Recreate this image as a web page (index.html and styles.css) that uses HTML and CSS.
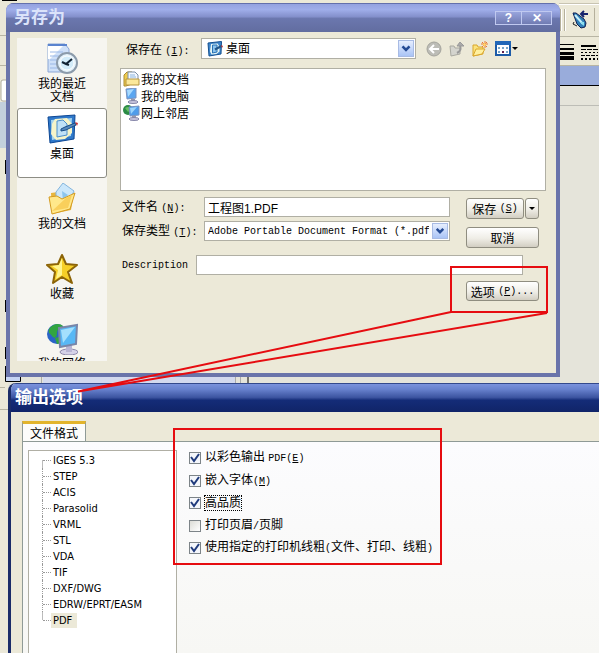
FILE: index.html
```html
<!DOCTYPE html>
<html lang="zh-CN">
<head>
    <meta charset="UTF-8">
    <meta name="viewport" content="width=device-width, initial-scale=1.0">
    <title>另存为</title>
    <link rel="stylesheet" href="styles.css">
</head>
<body>
    <div class="desktop">

        <!-- application window behind the dialogs -->
        <div class="app">
            <div class="app-bar">
                <svg width="40" height="36" viewBox="0 0 40 36">
                    <path d="M0 3.500h40" stroke="#c8c4b2"/><path d="M0 4.500h40" stroke="#fff"/>
                    <path d="M1.500 9v22M5.500 9v22" stroke="#b5b09c"/><path d="M2.500 9v22M6.500 9v22" stroke="#fff"/>
                    <path d="M14 13l3 0 8 6 2 4-1 4-4 1-4-4z" fill="#2f7fb8" stroke="#101f52"/>
                    <path d="M16 15l8 9" stroke="#c8f0fa" stroke-width="2"/>
                    <path d="M21 22l4 0 0 4z" fill="#8be0f0"/>
                    <path d="M15 22l-1 2 4 2" fill="none" stroke="#222"/>
                    <path d="M29 14h-6M25 11l-3 3 3 3" fill="none" stroke="#16246e" stroke-width="2"/>
                    <path d="M35.500 8v23" stroke="#b5b09c"/>
                </svg>
            </div>
            <div class="app-bar">
                <svg width="40" height="28" viewBox="0 0 40 28">
                    <path d="M0 7.500h15" stroke="#000"/><path d="M0 12h15" stroke="#000" stroke-width="2"/>
                    <path d="M0 16.500h15" stroke="#000" stroke-width="3"/><path d="M0 21h15" stroke="#000" stroke-width="4"/>
                    <path d="M22 9h15" stroke="#000" stroke-width="2"/>
                    <path d="M22 12.500h17" stroke="#000" stroke-dasharray="5 1"/>
                    <path d="M22 15.500h17" stroke="#000" stroke-dasharray="2 2"/>
                    <path d="M22 18.500h17" stroke="#000" stroke-dasharray="4 1"/>
                    <path d="M22 22h17" stroke="#000" stroke-dasharray="2 2" stroke-width="2"/>
                </svg>
            </div>
            <div class="app-title"></div>
            <div class="app-line"></div>
        </div>
        <svg class="backdrop" width="600" height="653" viewBox="0 0 600 653">
            <path d="M2 0h15v1H2z"/>
            <path d="M0 35.500h6M0 65.500h6M0 387.500h5M0 409.500h8" stroke="#b8b5a4"/>
            <path d="M6 80H3q-2 0-2 2v17q0 2 2 2h3" fill="#fff" stroke="#b0ad9e"/>
            <path d="M0 102h6v46H0z" fill="#c3d0dc"/>
            <path d="M5 160h1v14H5zM5 300h1v12H5zM5 347h1v12H5z"/>
            <path d="M43 377h192v6H43z" fill="#d3d9ee"/>
            <path d="M5.500 366v15.500h15V377" fill="#c6d4f4" stroke="#000"/>
            <path d="M41.500 377v6M235.500 377v6M240.500 377v6" stroke="#aaa"/>
            <path d="M248 377v6" stroke="#000"/>
        </svg>

        <!-- save as -->
        <div class="window save">
            <div class="titlebar">
                <h1>另存为</h1>
                <div class="caption-buttons">
                    <button type="button">?</button>
                    <button type="button">✕</button>
                </div>
            </div>
            <div class="save-body">
                <div class="places">
                    <button type="button" class="place">
                        <svg width="32" height="32" viewBox="0 0 32 32">
                            <path d="M2 1h17l4 5v23H2z" fill="#cfe0f8" stroke="#8ba6d4"/>
                            <path d="M2 1h17l-15 15H2z" fill="#fff"/>
                            <path d="M2 1h19v2H2z" fill="#5b84cf"/>
                            <path d="M4 9h13M4 13h9M4 17h7M4 21h7M4 25h9" stroke="#9bb8e6"/>
                            <circle cx="21" cy="20" r="10" fill="#e4f2fb" stroke="#8c9bab" stroke-width="2"/>
                            <circle cx="21" cy="20" r="7" fill="#d3ecfa" stroke="#fff"/>
                            <path d="M26 16l-6 5-4-2M20 21l3 1" fill="none" stroke="#123" stroke-width="2"/>
                        </svg>
                        <span>我的最近<br>文档</span>
                    </button>
                    <button type="button" class="place selected">
                        <svg width="32" height="32" viewBox="0 0 32 32">
                            <path d="M2 4l27-2-1 24-24 4z" fill="#2f78c9" stroke="#0d4794"/>
                            <path d="M5 7l21-2-1 18-19 4z" fill="#a5d4ef"/>
                            <path d="M9 6l12-1 5 6v9l-7 6-9 1-5-6 1-10z" fill="#f6f4c9"/>
                            <path d="M11 8l6-1 4 4v11l-10 2z" fill="#bfe1f7" stroke="#4b8fcc"/>
                            <path d="M15 16l4-2 10-4 1 2-10 5-5 1z" fill="#5689be" stroke="#174d88"/>
                            <path d="M29 9l3 1-1 3z" fill="#c33"/>
                        </svg>
                        <span>桌面</span>
                    </button>
                    <button type="button" class="place">
                        <svg width="32" height="32" viewBox="0 0 32 32">
                            <path d="M5 10l7-1 3 4 13-3-3 17-19 4z" fill="#e8b63e"/>
                            <path d="M10 9l7-9 11 8-7 15-11-2z" fill="#cbe7fb" stroke="#83b4dc"/>
                            <path d="M16 8l6 4-5 6z" fill="#8cc5ee"/>
                            <path d="M3 14l8-1 5 3 13-6-5 16-18 5z" fill="#ffe88b" stroke="#d49b20"/>
                            <path d="M6 28l14-13 6-3-4 13z" fill="#f9cf5b"/>
                        </svg>
                        <span>我的文档</span>
                    </button>
                    <button type="button" class="place">
                        <svg width="32" height="32" viewBox="0 0 32 32">
                            <path d="M16 2l4 9 11 1-9 7 4 11-10-6-9 6 2-11-8-7 11-1z" fill="#f6cf27" stroke="#8c6408" stroke-width="2" stroke-linejoin="round"/>
                            <path d="M16 5v17l-6 4 2-9-6-4 7-1z" fill="#fff48d"/>
                        </svg>
                        <span>收藏</span>
                    </button>
                    <button type="button" class="place">
                        <svg width="32" height="32" viewBox="0 0 32 32">
                            <circle cx="11" cy="11" r="10" fill="#2a63c6"/>
                            <path d="M3 6c4-6 11-6 14-3-2 4-6 2-6 7s-3 6-5 3-4-2-3-7zM9 15l7-2v7l-5 1z" fill="#32a540"/>
                            <ellipse cx="23" cy="29" rx="9" ry="3" fill="#d5d2e8" stroke="#8d88ab"/>
                            <path d="M20 22h6v7h-6z" fill="#b9b5d4"/>
                            <path d="M13 5l18-3-1 19-16 3z" fill="#58b8f5" stroke="#7a86a8" stroke-width="2"/>
                            <path d="M15 7l14-3-12 16z" fill="#a4e0fd"/>
                        </svg>
                        <span>我的网络</span>
                    </button>
                </div>

                <form class="save-main">
                    <div class="lookin">
                        <label for="lookin">保存在 <i>(<u>I</u>):</i></label>
                        <div class="combo lookin-combo">
                            <svg width="16" height="16" viewBox="0 0 32 32">
                                <path d="M2 4l27-3-1 25-24 4z" fill="#3f86cc" stroke="#14508f" stroke-width="2"/>
                                <path d="M8 6l13-1 4 6v10l-6 5-10 1-3-6z" fill="#e8f6f4"/>
                                <path d="M11 8h9v14l-9 2z" fill="#8cc4ee" stroke="#2b72b4" stroke-width="2"/>
                                <path d="M16 17l13-7" stroke="#225588" stroke-width="4"/>
                                <path d="M28 8l4 2-2 4z" fill="#c33"/>
                            </svg>
                            <select id="lookin"><option>桌面</option></select>
                            <svg class="arrow" width="16" height="17" viewBox="0 0 16 17"><path d="M4 6l4 4 4-4" fill="none" stroke="#244a94" stroke-width="3"/></svg>
                        </div>
                        <div class="tools">
                            <button type="button" aria-label="后退">
                                <svg width="16" height="16" viewBox="0 0 16 16"><circle cx="8" cy="8" r="7" fill="#bcbcb6" stroke="#a3a39c"/><path d="M13 8H4M8 4L4 8l4 4" fill="none" stroke="#fff" stroke-width="2"/></svg>
                            </button>
                            <button type="button" aria-label="向上">
                                <svg width="16" height="16" viewBox="0 0 16 16"><path d="M1 5h4l1 2h5v6l-9 2z" fill="#d4d4ce" stroke="#a8a8a0"/><path d="M8 12c4-2 4-4 3-8" fill="none" stroke="#999" stroke-width="2"/><path d="M8 5l3-4 4 4z" fill="#aaa" stroke="#999"/></svg>
                            </button>
                            <button type="button" aria-label="新建文件夹">
                                <svg width="16" height="16" viewBox="0 0 16 16"><path d="M1 4h4l1 2h5v7l-10 2z" fill="#fbe37c" stroke="#d9a62c"/><path d="M4 8h9l-3 5-9 2z" fill="#fff0a0" stroke="#d9a62c"/><path d="M13 0v7M9 3h7M10 1l5 5M15 1l-5 5" stroke="#ea7a30"/><circle cx="12.500" cy="3.500" r="1.500" fill="#ffd36a"/></svg>
                            </button>
                            <button type="button" aria-label="查看">
                                <svg width="23" height="16" viewBox="0 0 23 16"><path d="M1 1h14v13H1z" fill="#fff" stroke="#1c5ba8" stroke-width="2"/><path d="M0 0h16v4H0z" fill="#2167b8"/><path d="M3 6h2v2H3zM7 6h2v2H7zM11 6h2v2h-2zM3 10h2v2H3zM11 10h2v2h-2z" fill="#78a5c8"/><path d="M7 10h2v2H7z" fill="#602050"/><path d="M17 6h6l-3 3z" fill="#000"/></svg>
                            </button>
                        </div>
                    </div>

                    <ul class="files">
                        <li>
                            <svg width="17" height="16" viewBox="0 0 17 16"><path d="M1 4l3-3h5v12l-6 2H1z" fill="#f0cc4d" stroke="#a98b35"/><path d="M5 1h7l3 3v9H5z" fill="#f3f8ff" stroke="#7c8fa8"/><path d="M7 4h5M7 6h6" stroke="#8cb5dd"/><path d="M3 8h13v6H3z" fill="#fbe89a" stroke="#b5953e"/></svg>
                            我的文档
                        </li>
                        <li>
                            <svg width="17" height="16" viewBox="0 0 17 16"><path d="M3 1l10-1v10l-9 1z" fill="#5ba6f0" stroke="#7c93bf"/><path d="M4 2l7-1-6 8z" fill="#a8dafe"/><path d="M8 11h4v3H8z" fill="#99a"/><ellipse cx="10" cy="14" rx="5" ry="1.500" fill="#c7c5dd" stroke="#8686a8"/></svg>
                            我的电脑
                        </li>
                        <li>
                            <svg width="17" height="16" viewBox="0 0 17 16"><circle cx="5" cy="5" r="5" fill="#2b8b46"/><path d="M2 3c4-3 7 1 3 4z" fill="#67bf5e"/><path d="M6 2l10-1v9l-9 1z" fill="#4f9cea" stroke="#7c93bf"/><path d="M7 3l7-1-6 7z" fill="#9ad4fc"/><path d="M9 11h4v3H9z" fill="#99a"/><ellipse cx="11" cy="14" rx="5" ry="1.500" fill="#c7c5dd" stroke="#8686a8"/></svg>
                            网上邻居
                        </li>
                    </ul>

                    <div class="fields">
                        <div class="fields-left">
                            <label for="filename">文件名 <i>(<u>N</u>):</i></label>
                            <div class="combo">
                                <input type="text" id="filename" value="工程图1.PDF">
                            </div>
                            <label for="filetype">保存类型 <i>(<u>T</u>):</i></label>
                            <div class="combo">
                                <select id="filetype" class="latin"><option>Adobe Portable Document Format (*.pdf)</option></select>
                                <svg class="arrow" width="16" height="16" viewBox="0 0 16 17"><path d="M4 6l4 4 4-4" fill="none" stroke="#244a94" stroke-width="3"/></svg>
                            </div>
                        </div>
                        <div class="fields-right">
                            <div class="split">
                                <button type="button" class="btn">保存 <i>(<u>S</u>)</i></button>
                                <button type="button" class="btn btn-drop" aria-label="更多"><svg width="6" height="3" viewBox="0 0 6 3"><path d="M0 0h6L3 3z"/></svg></button>
                            </div>
                            <button type="button" class="btn">取消</button>
                        </div>
                    </div>

                    <div class="description">
                        <label for="description" class="latin">Description</label>
                        <input type="text" id="description">
                    </div>
                    <div class="options">
                        <button type="button" class="btn">选项 <i>(<u>P</u>)...</i></button>
                    </div>
                </form>
            </div>
        </div>

        <!-- export options -->
        <div class="window export">
            <div class="titlebar">
                <h1>输出选项</h1>
            </div>
            <div class="tabs">
                <button type="button" class="tab">文件格式</button>
            </div>
            <div class="panel">
                <ul class="tree">
                    <li><span>IGES 5.3</span></li>
                    <li><span>STEP</span></li>
                    <li><span>ACIS</span></li>
                    <li><span>Parasolid</span></li>
                    <li><span>VRML</span></li>
                    <li><span>STL</span></li>
                    <li><span>VDA</span></li>
                    <li><span>TIF</span></li>
                    <li><span>DXF/DWG</span></li>
                    <li><span>EDRW/EPRT/EASM</span></li>
                    <li><span class="current">PDF</span></li>
                </ul>
                <div class="checks">
                    <label><input type="checkbox" checked><span>以彩色输出 <i>PDF(<u>E</u>)</i></span></label>
                    <label><input type="checkbox" checked><span>嵌入字体<i>(<u>M</u>)</i></span></label>
                    <label><input type="checkbox" checked><span class="focus">高品质</span></label>
                    <label><input type="checkbox"><span>打印页眉<i>/</i>页脚</span></label>
                    <label><input type="checkbox" checked><span>使用指定的打印机线粗<i>(</i>文件、打印、线粗<i>)</i></span></label>
                </div>
            </div>
        </div>

        <!-- red marks over both windows -->
        <svg class="marks" width="600" height="653" viewBox="0 0 600 653">
            <path d="M451 267h96v45h-96zM451 312L78 391.500 547 313M174 429h267v135H174z"/>
        </svg>
    </div>
</body>
</html>
```
FILE: styles.css
```css
* {
    box-sizing: border-box;
}

body {
    margin: 0;
    font-family: "Liberation Sans", "Noto Sans CJK SC", sans-serif;
    font-size: 12px;
    color: #000;
}

button, input, select {
    font-family: inherit;
    font-size: 12px;
    color: #000;
    margin: 0;
}

ul {
    list-style: none;
    margin: 0;
    padding: 0;
}

i, .latin {
    font-family: "Liberation Mono", monospace;
    font-size: 10px;
    font-style: normal;
}

svg {
    display: block;
    flex: none;
}

.desktop {
    position: relative;
    height: 100vh;
    overflow: hidden;
    padding-left: 6px;
    background: linear-gradient(90deg, #ebe8d8 8px, #e5e4da 8px);
}

/* application behind */
.app {
    display: flex;
    flex-direction: column;
}

.app-bar {
    display: flex;
    justify-content: flex-end;
    background: #ece9d8;
    border-bottom: 1px solid #b8b5a4;
}

.app-title {
    height: 20px;
    background: #99acdb;
    border-bottom: 1px solid #000;
}

.app-line {
    height: 20px;
    border-bottom: 1px solid #bdbdb6;
}

.backdrop, .marks {
    position: absolute;
    top: 0;
    left: 0;
    pointer-events: none;
}

.marks {
    fill: none;
    stroke: #e60c10;
    stroke-width: 2;
}

/* windows */
.window {
    position: absolute;
}

.titlebar {
    display: flex;
    justify-content: space-between;
    align-items: center;
    height: 29px;
    padding: 0 8px;
}

.titlebar h1 {
    margin: 0;
    font-size: 17px;
    line-height: 20px;
}

.save {
    top: 3px;
    left: 6px;
    width: 554px;
    background: #6a74aa;
    border-radius: 8px 8px 0 0;
    padding: 0 4px 4px;
    overflow: hidden;
}

.save .titlebar {
    margin: 0 -4px;
    border-top: 1px solid #6470ac;
    background: linear-gradient(#94a2e0, #a0aeea 20%, #8490cc 45%, #6b77ae 52%, #626da0);
}

.save h1 {
    color: #dbe3fa;
}

.caption-buttons {
    display: flex;
}

.caption-buttons button {
    width: 31px;
    height: 14px;
    padding: 0;
    border: 1px solid #c0c9f0;
    background: linear-gradient(#98a4dc, #707bb2);
    color: #fff;
    font-weight: bold;
    line-height: 11px;
}

.caption-buttons button:first-child {
    width: 26px;
    border-right: 0;
}

.save-body {
    display: flex;
    gap: 13px;
    padding: 6px 10px 12px 7px;
    background: #ece9d8;
}

.places {
    width: 90px;
    height: 323px;
    overflow: hidden;
    flex: none;
    background: #f6f5f0;
}

.place {
    display: flex;
    flex-direction: column;
    align-items: center;
    gap: 3px;
    width: 90px;
    height: 70px;
    padding: 4px 0 0;
    border: 1px solid transparent;
    border-radius: 3px;
    background: none;
    line-height: 13px;
}

.place.selected {
    background: #fff;
    border-color: #8d8d84;
}

.save-main {
    flex: 1;
    min-width: 0;
}

.lookin {
    display: flex;
    align-items: center;
    height: 21px;
    margin-bottom: 9px;
    padding-left: 6px;
}

.lookin label {
    width: 75px;
}

.combo {
    position: relative;
    display: flex;
    align-items: center;
    height: 20px;
    background: #fff;
    border: 1px solid #b0afa4;
}

.lookin-combo {
    width: 215px;
    height: 21px;
    padding-left: 5px;
}

.combo select, .combo input {
    flex: 1;
    width: 100%;
    height: 18px;
    padding: 0 20px 0 3px;
    border: 0;
    border-radius: 0;
    background: none;
    appearance: none;
}

.combo .latin {
    font-family: "Liberation Mono", monospace;
    font-size: 10px;
}

.arrow {
    position: absolute;
    right: 1px;
    top: 1px;
    background: linear-gradient(#e6eefe, #aac4f6);
    border: 1px solid #a8bbe4;
    pointer-events: none;
}

.tools {
    display: flex;
    gap: 7px;
    margin-left: 10px;
}

.tools button {
    padding: 0;
    border: 0;
    background: none;
}

.files {
    height: 123px;
    padding: 1px 2px;
    background: #fff;
    border: 1px solid #b0afa4;
}

.files li {
    display: flex;
    align-items: center;
    gap: 1px;
    height: 17px;
}

.fields {
    display: flex;
    justify-content: space-between;
    margin-top: 6px;
    padding-right: 7px;
}

.fields-left {
    display: grid;
    grid-template-columns: 82px 246px;
    row-gap: 4px;
    align-content: start;
    padding-left: 2px;
}

.fields-right {
    display: flex;
    flex-direction: column;
    gap: 8px;
    width: 73px;
    padding-top: 1px;
}

.split {
    display: flex;
    gap: 1px;
}

.split .btn:first-child {
    flex: 1;
}

.btn {
    display: flex;
    align-items: center;
    justify-content: center;
    height: 21px;
    padding: 0 2px;
    border: 1px solid #8f8d80;
    border-radius: 3px;
    background: linear-gradient(#fff, #efede6 55%, #d2cec2);
    white-space: pre;
}

.btn-drop {
    width: 14px;
}

.description {
    display: flex;
    align-items: center;
    margin-top: 7px;
    padding: 0 23px 0 2px;
}

.description label {
    width: 74px;
}

.description input {
    flex: 1;
    min-width: 0;
    height: 20px;
    border: 1px solid #b0afa4;
    background: #fff;
}

.options {
    display: flex;
    justify-content: flex-end;
    margin-top: 6px;
    padding-right: 7px;
}

.options .btn {
    width: 73px;
    height: 20px;
}

/* export options */
.export {
    top: 383px;
    left: 8px;
    right: 0;
    bottom: 0;
    display: flex;
    flex-direction: column;
    background: #ece9d8;
    border-left: 3px solid #1b2c68;
    border-radius: 8px 0 0 0;
    overflow: hidden;
}

.export .titlebar {
    flex: none;
    padding: 0 4px;
    border-top: 1px solid #33498c;
    background: linear-gradient(#7a92dc, #6680cc 20%, #3c54a0 48%, #142c78 58%, #102468);
}

.export h1 {
    color: #fff;
}

.tabs {
    display: flex;
    height: 29px;
    align-items: flex-end;
    padding-left: 11px;
}

.tab {
    width: 64px;
    height: 20px;
    padding: 0;
    border: 1px solid #8f9a96;
    border-top: 3px solid #e2b42c;
    border-bottom: 0;
    background: #fcfcfa;
}

.panel {
    flex: 1;
    display: flex;
    margin-left: 11px;
    padding: 8px 0 0 5px;
    background: linear-gradient(#fcfcfe, #f7f7f4);
    border-top: 1px solid #8f9a96;
    border-left: 1px solid #8f9a96;
}

.tree {
    width: 149px;
    padding: 1px 0 0 13px;
    background: #fff;
    border: 1px solid #b0afa4;
    border-bottom: 0;
    font-family: "DejaVu Sans Condensed", "DejaVu Sans", sans-serif;
    font-size: 11px;
}

.tree li {
    display: flex;
    align-items: center;
    height: 16px;
    line-height: 15px;
    border-left: 1px dotted #999;
}

.tree li:first-child {
    border-image: linear-gradient(transparent 50%, #bbb 50%) 1;
}

.tree li:last-child {
    border-image: linear-gradient(#bbb 50%, transparent 50%) 1;
}

.tree li::before {
    content: "";
    width: 8px;
    border-top: 1px dotted #999;
}

.tree span {
    padding: 0 2px;
}

.tree .current {
    padding-right: 5px;
    background: #ece9d8;
}

.checks {
    display: flex;
    flex-direction: column;
    justify-content: space-between;
    height: 106px;
    padding-left: 12px;
}

.checks label {
    display: flex;
    align-items: center;
    gap: 4px;
    height: 16px;
    line-height: 14px;
    white-space: nowrap;
}

.checks input {
    width: 12px;
    height: 12px;
    appearance: none;
    border: 1px solid #7d8488;
    background: linear-gradient(135deg, #dcdcd6, #fff);
}

.checks input:checked {
    background: #f4f6fb url("data:image/svg+xml,%3Csvg xmlns='http://www.w3.org/2000/svg' viewBox='0 0 10 10'%3E%3Cpath d='M1 4l3 4 5-7' fill='none' stroke='%231f3a7c' stroke-width='2'/%3E%3C/svg%3E");
}

.focus {
    outline: 1px dotted #000;
}
```
